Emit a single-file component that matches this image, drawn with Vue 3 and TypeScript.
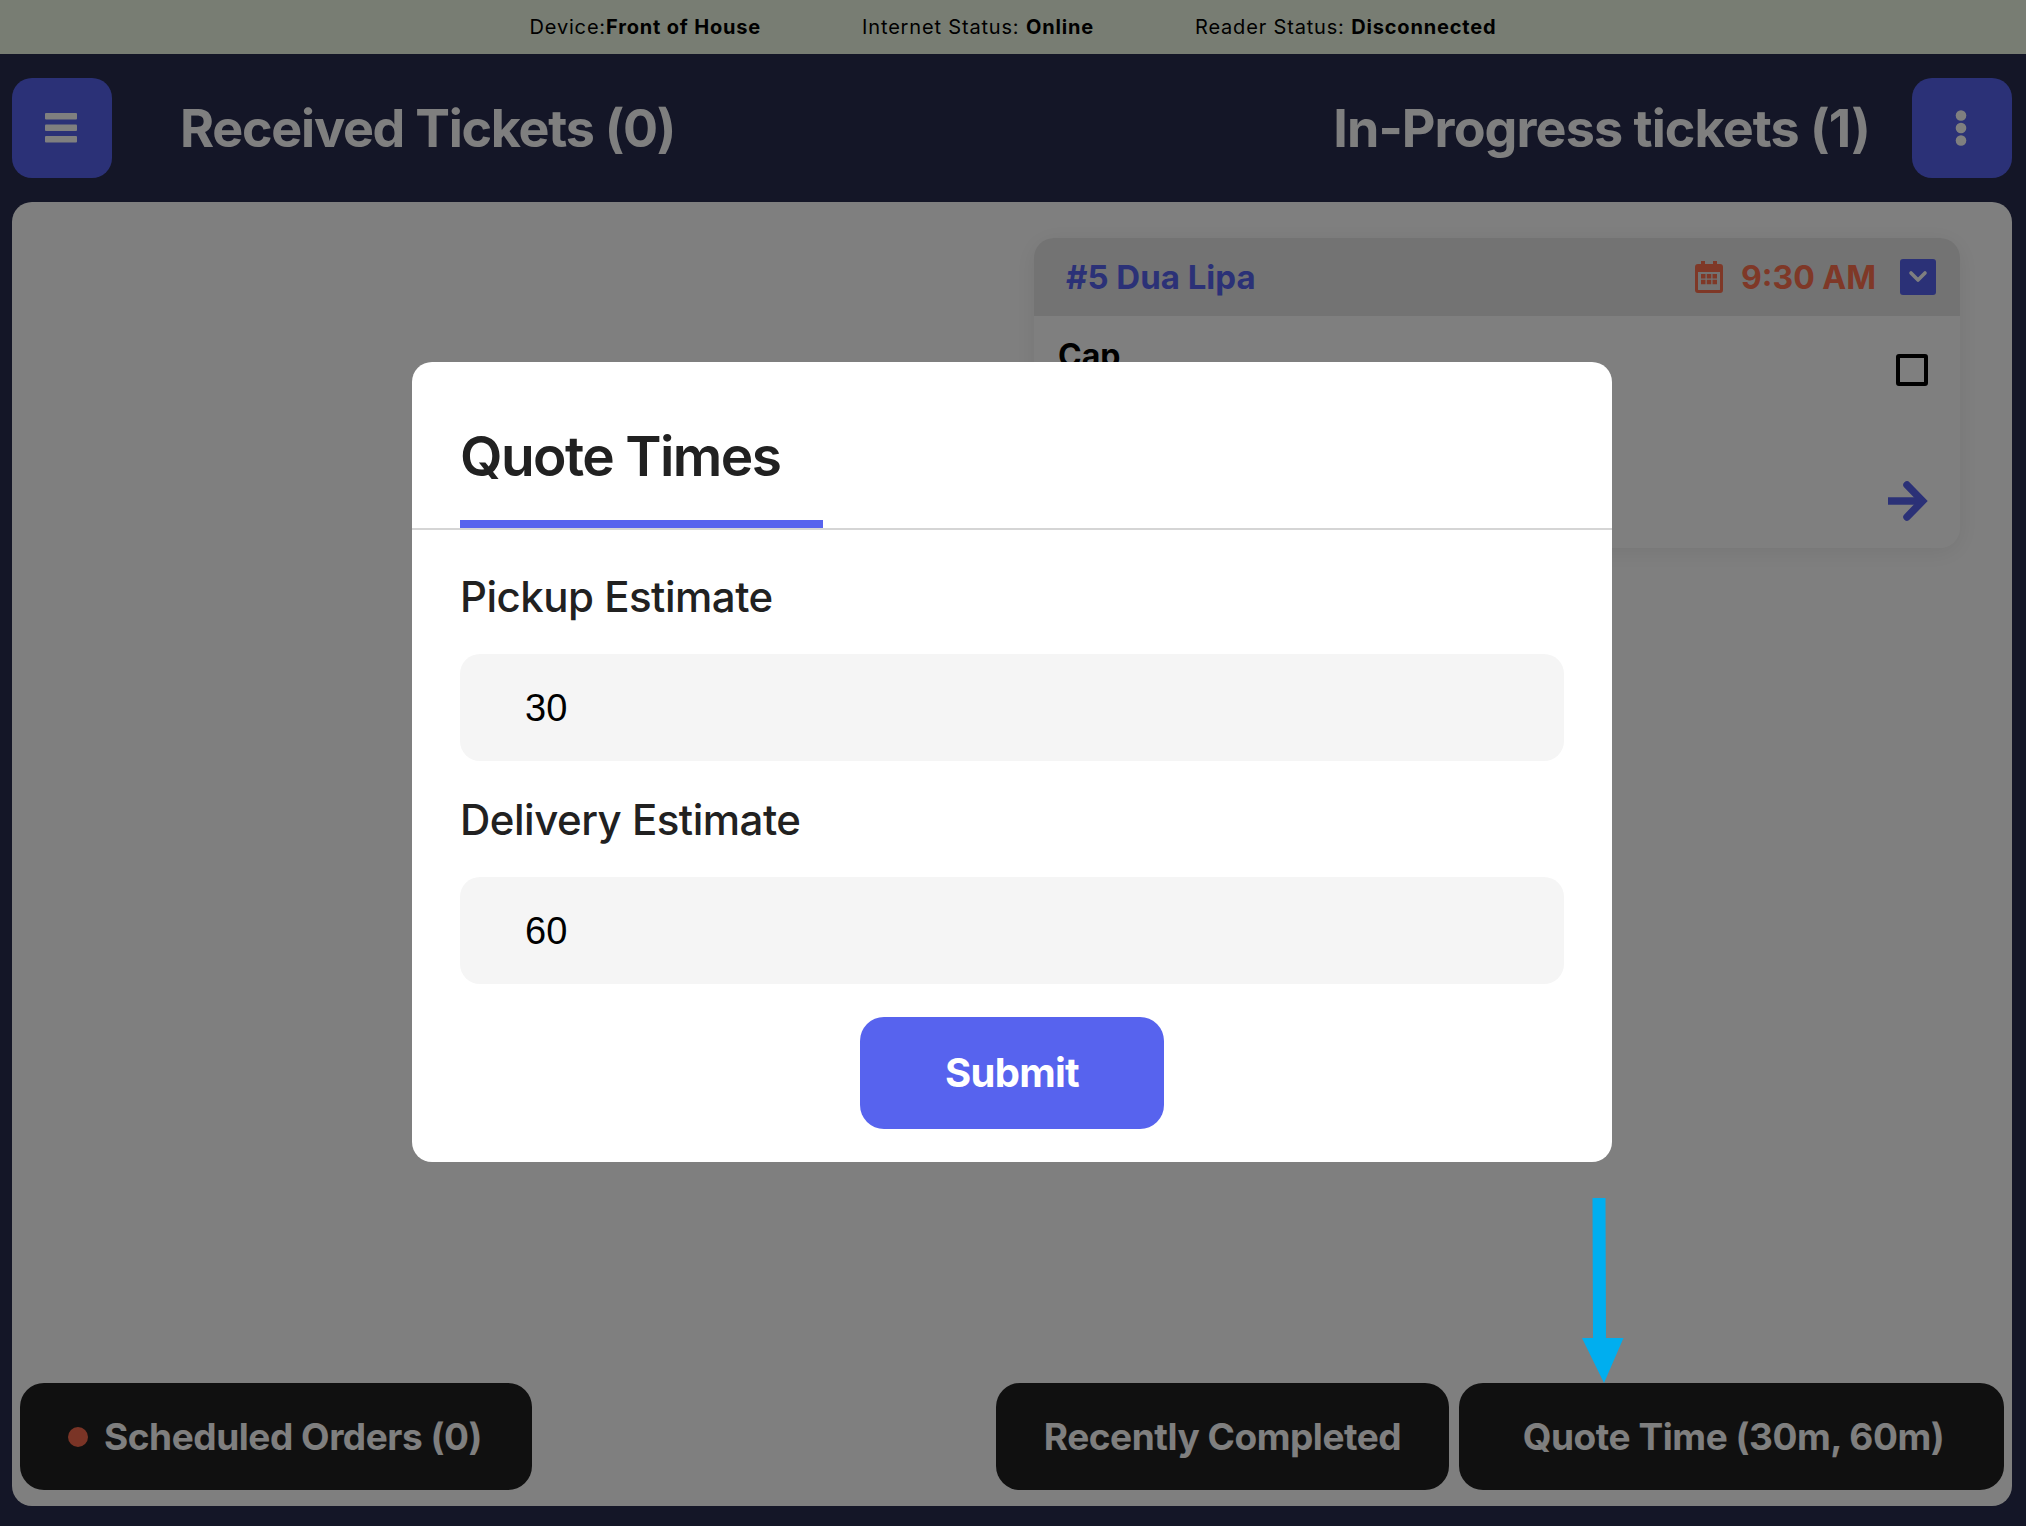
<script setup lang="ts">
import { ref } from "vue"

const statusItems = [
  { label: "Device:", value: "Front of House" },
  { label: "Internet Status: ", value: "Online" },
  { label: "Reader Status: ", value: "Disconnected" },
]

const pickup = ref("30")
const delivery = ref("60")
</script>

<template>
  <div class="page">
    <div class="status-bar">
      <span v-for="item in statusItems" :key="item.label" class="status-item">
        {{ item.label }}<b>{{ item.value }}</b>
      </span>
    </div>

    <header class="header">
      <button class="icon-btn">
        <svg class="nudge" width="34" height="30" viewBox="0 0 34 30" fill="currentColor">
          <rect x="1" y="0" width="32" height="6.500" rx="1" />
          <rect x="1" y="11.500" width="32" height="6.500" rx="1" />
          <rect x="1" y="23" width="32" height="6.500" rx="1" />
        </svg>
      </button>
      <h1 class="title received">Received Tickets (0)</h1>
      <h1 class="title progress">In-Progress tickets (1)</h1>
      <button class="icon-btn">
        <svg class="nudge" width="12" height="36" viewBox="0 0 12 36" fill="currentColor">
          <circle cx="6" cy="5.500" r="5.300" />
          <circle cx="6" cy="18" r="5.300" />
          <circle cx="6" cy="30.500" r="5.300" />
        </svg>
      </button>
    </header>

    <main class="panel">
      <div class="columns">
        <div></div>
        <section class="ticket">
          <div class="ticket-head">
            <span class="ticket-name">#5 Dua Lipa</span>
            <svg class="calendar" width="28" height="32" viewBox="0 0 28 32">
              <path
                fill="#fe704e"
                fill-rule="evenodd"
                d="M6 0h4v3h8V0h4v3h3a3 3 0 0 1 3 3v23a3 3 0 0 1-3 3H3a3 3 0 0 1-3-3V6a3 3 0 0 1 3-3h3zM3 11v17.500a.5.5 0 0 0 .5.5h21a.5.5 0 0 0 .5-.5V11zM6 13h4.500v4.500H6zm5.750 0h4.500v4.500h-4.500zm5.750 0H22v4.500h-4.500zM6 18.750h4.500v4.500H6zm5.750 0h4.500v4.500h-4.500zm5.750 0H22v4.500h-4.500z"
              />
            </svg>
            <span class="ticket-time">9:30 AM</span>
            <span class="chevron">
              <svg width="24" height="16" viewBox="0 0 24 16" fill="none">
                <path
                  d="M5 4l7 7 7-7"
                  stroke="#fff"
                  stroke-width="3.600"
                  stroke-linecap="round"
                  stroke-linejoin="round"
                />
              </svg>
            </span>
          </div>
          <div class="ticket-body">
            <div class="item-row">
              <strong class="item-name">Cap</strong>
              <span class="checkbox"></span>
            </div>
            <div class="ticket-foot">
              <svg width="42" height="42" viewBox="0 0 42 42" fill="none">
                <path d="M2 21h34" stroke="#5763ee" stroke-width="7.300" />
                <path
                  d="M21 5l15.500 16L21 37"
                  stroke="#5763ee"
                  stroke-width="7.500"
                  stroke-linecap="round"
                />
              </svg>
            </div>
          </div>
        </section>
      </div>

      <div class="tabs">
        <button class="tab scheduled"><i class="dot"></i>Scheduled Orders (0)</button>
        <button class="tab completed">Recently Completed</button>
        <button class="tab quote">Quote Time (30m, 60m)</button>
      </div>
    </main>

    <div class="overlay">
      <form class="modal" @submit.prevent>
        <div class="modal-head">
          <h2 class="modal-title">Quote Times</h2>
        </div>
        <div class="modal-body">
          <label class="field-label">Pickup Estimate</label>
          <input v-model="pickup" class="field" />
          <label class="field-label second">Delivery Estimate</label>
          <input v-model="delivery" class="field" />
          <button class="submit">Submit</button>
        </div>
      </form>
    </div>

    <svg class="callout" width="42" height="186" viewBox="0 0 42 186">
      <path fill="#00aeef" d="M10.500 0h13l.5 140h17.500L22 185 0 140h11z" />
    </svg>
  </div>
</template>

<style>
body {
  margin: 0;
}
</style>

<style scoped>
.page {
  position: relative;
  height: 1526px;
  display: flex;
  flex-direction: column;
  background: #282c4e;
  font-family: Inter, "Liberation Sans", sans-serif;
  overflow: hidden;
}

.status-bar {
  height: 54px;
  flex: none;
  display: flex;
  justify-content: center;
  align-items: center;
  gap: 101px;
  background: #f0fbe6;
  color: #000;
  font-size: 20px;
  letter-spacing: 0.83px;
}

.status-item {
  white-space: pre;
}

.header {
  height: 148px;
  flex: none;
  display: flex;
  align-items: center;
  padding: 0 14px 0 12px;
  color: #fff;
}

.icon-btn {
  width: 100px;
  height: 100px;
  flex: none;
  display: flex;
  align-items: center;
  justify-content: center;
  background: #5763ee;
  border: none;
  border-radius: 20px;
  color: #fff;
  padding: 0;
}

.nudge {
  margin-right: 2px;
}

.title {
  margin: 0;
  font-size: 52px;
  font-weight: 700;
}

.received {
  margin-left: 68px;
  letter-spacing: -1.25px;
}

.progress {
  margin-left: auto;
  margin-right: 42px;
  letter-spacing: -0.9px;
}

.panel {
  margin: 0 14px 20px 12px;
  flex: 1;
  display: flex;
  flex-direction: column;
  background: #fff;
  border-radius: 20px;
  min-height: 0;
}

.columns {
  flex: 1;
  display: grid;
  grid-template-columns: 1fr 926px;
  padding: 36px 52px 0 0;
}

.ticket {
  height: 310px;
  border-radius: 20px;
  background: #fff;
  box-shadow: 0 4px 24px rgba(0, 0, 0, 0.08);
  overflow: hidden;
}

.ticket-head {
  height: 78px;
  display: flex;
  align-items: center;
  padding: 0 24px 0 32px;
  background: #e6e6e6;
}

.ticket-name {
  color: #5763ee;
  font-size: 33px;
  font-weight: 700;
  margin-right: auto;
}

.calendar {
  margin-right: 18px;
}

.ticket-time {
  color: #fe704e;
  font-size: 32px;
  font-weight: 700;
  margin-right: 24px;
}

.chevron {
  width: 36px;
  height: 36px;
  display: flex;
  align-items: center;
  justify-content: center;
  background: #5763ee;
  border-radius: 3px;
}

.ticket-body {
  padding: 20px 32px 0 24px;
}

.item-row {
  display: flex;
  justify-content: space-between;
  align-items: flex-start;
}

.item-name {
  font-size: 32px;
  font-weight: 700;
  color: #000;
  line-height: 40px;
}

.checkbox {
  width: 32px;
  height: 32px;
  box-sizing: border-box;
  border: 4px solid #000;
  border-radius: 3px;
  margin-top: 18px;
}

.ticket-foot {
  display: flex;
  justify-content: flex-end;
  margin-top: 94px;
}

.tabs {
  display: flex;
  gap: 10px;
  padding: 0 8px 16px;
}

.tab {
  height: 107px;
  display: flex;
  align-items: center;
  background: #202020;
  border: none;
  border-radius: 24px;
  color: #fff;
  font-family: inherit;
  font-size: 37px;
  font-weight: 700;
  letter-spacing: -0.45px;
  white-space: nowrap;
}

.scheduled {
  width: 512px;
  padding: 0 0 0 48px;
  margin-right: auto;
}

.completed {
  width: 453px;
  justify-content: center;
  padding: 0;
}

.quote {
  width: 545px;
  justify-content: center;
  padding: 0 0 0 4px;
}

.dot {
  width: 20px;
  height: 20px;
  margin-right: 16px;
  border-radius: 50%;
  background: #f4694c;
}

.overlay {
  position: absolute;
  inset: 0;
  display: flex;
  align-items: center;
  justify-content: center;
  padding: 0 2px 2px 0;
  background: rgba(0, 0, 0, 0.5);
}

.modal {
  width: 1200px;
  height: 800px;
  background: #fff;
  border-radius: 20px;
  overflow: hidden;
}

.modal-head {
  height: 166px;
  padding-left: 48px;
  border-bottom: 2px solid #d5d5d5;
}

.modal-title {
  box-sizing: border-box;
  width: 363px;
  height: 166px;
  margin: 0;
  padding-top: 62px;
  border-bottom: 8px solid #5763ee;
  color: #212121;
  font-size: 55px;
  font-weight: 600;
  letter-spacing: -1.6px;
  line-height: 64px;
}

.modal-body {
  display: flex;
  flex-direction: column;
  align-items: center;
  padding: 41px 48px 0;
}

.field-label {
  align-self: flex-start;
  color: #212121;
  font-size: 42px;
  font-weight: 500;
  line-height: 52px;
  letter-spacing: -0.5px;
}

.second {
  margin-top: 33px;
}

.field {
  box-sizing: border-box;
  width: 100%;
  height: 107px;
  margin-top: 31px;
  padding: 2px 65px 0;
  background: #f5f5f5;
  border: none;
  border-radius: 20px;
  color: #000;
  font-family: "Liberation Sans", sans-serif;
  font-size: 38px;
  outline: none;
}

.submit {
  width: 304px;
  height: 112px;
  margin-top: 33px;
  padding: 0 0 2px;
  background: #5763ee;
  border: none;
  border-radius: 24px;
  color: #fff;
  font-family: inherit;
  font-size: 40px;
  font-weight: 700;
  letter-spacing: -0.7px;
}

.callout {
  position: absolute;
  left: 1582px;
  top: 1198px;
}
</style>
